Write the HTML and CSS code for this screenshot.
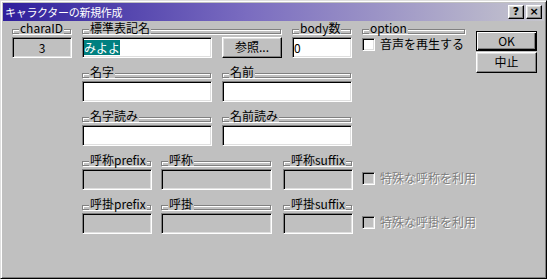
FILE: index.html
```html
<!DOCTYPE html>
<html lang="ja">
<head>
  <meta charset="UTF-8" />
  <title>キャラクターの新規作成</title>
  <link rel="stylesheet" href="styles.css">
</head>
<body>
  <div class="window">
    <div class="titlebar">
      <span class="title">キャラクターの新規作成</span>
      <div class="caption-btns">
        <span class="cap-btn">?</span>
        <span class="cap-btn">×</span>
      </div>
    </div>

    <div class="content">
      <div class="col-left">
        <div class="field w60">
          <div class="group"></div>
          <span class="label">charaID</span>
          <div class="edit readonly center">3</div>
        </div>
      </div>

      <div class="col-main">
        <div class="row">
          <div class="field w200">
            <div class="group"></div>
            <span class="label">標準表記名</span>
            <div class="pair">
              <div class="edit w130"><span class="sel">みよよ</span></div>
              <div class="btn w60">参照...</div>
            </div>
          </div>
          <div class="field w60">
            <div class="group"></div>
            <span class="label">body数</span>
            <div class="edit">0</div>
          </div>
          <div class="field w104">
            <div class="group"></div>
            <span class="label">option</span>
            <div class="check option-check">
              <span class="box"></span>
              <span>音声を再生する</span>
            </div>
          </div>
        </div>

        <div class="row">
          <div class="field w130">
            <div class="group"></div>
            <span class="label">名字</span>
            <div class="edit"></div>
          </div>
          <div class="field w130">
            <div class="group"></div>
            <span class="label">名前</span>
            <div class="edit"></div>
          </div>
        </div>

        <div class="row">
          <div class="field w130">
            <div class="group"></div>
            <span class="label">名字読み</span>
            <div class="edit"></div>
          </div>
          <div class="field w130">
            <div class="group"></div>
            <span class="label">名前読み</span>
            <div class="edit"></div>
          </div>
        </div>

        <div class="row row-call">
          <div class="field w70">
            <div class="group"></div>
            <span class="label">呼称prefix</span>
            <div class="edit disabled"></div>
          </div>
          <div class="field w111">
            <div class="group"></div>
            <span class="label">呼称</span>
            <div class="edit disabled"></div>
          </div>
          <div class="field w70">
            <div class="group"></div>
            <span class="label">呼称suffix</span>
            <div class="edit disabled"></div>
          </div>
          <div class="check off">
            <span class="box"></span>
            <span>特殊な呼称を利用</span>
          </div>
        </div>

        <div class="row row-call">
          <div class="field w70">
            <div class="group"></div>
            <span class="label">呼掛prefix</span>
            <div class="edit disabled"></div>
          </div>
          <div class="field w111">
            <div class="group"></div>
            <span class="label">呼掛</span>
            <div class="edit disabled"></div>
          </div>
          <div class="field w70">
            <div class="group"></div>
            <span class="label">呼掛suffix</span>
            <div class="edit disabled"></div>
          </div>
          <div class="check off">
            <span class="box"></span>
            <span>特殊な呼掛を利用</span>
          </div>
        </div>
      </div>

      <div class="col-buttons">
        <div class="btn default">OK</div>
        <div class="btn">中止</div>
      </div>
    </div>
  </div>
</body>
</html>
```

FILE: styles.css
```css
body {
  margin: 0;
  background: #c0c0c0;
  font-family: "Noto Sans CJK JP", sans-serif;
  font-size: 12px;
  color: #000;
}

.window {
  width: 547px;
  height: 279px;
  box-sizing: border-box;
  background: #c0c0c0;
  border: 1px solid;
  border-color: #dfdfdf #000 #000 #dfdfdf;
  box-shadow: inset 1px 1px #fff, inset -1px -1px #808080;
  padding: 2px;
}

.titlebar {
  height: 18px;
  display: flex;
  align-items: center;
  justify-content: space-between;
  padding: 0 2px 0 2px;
  background: linear-gradient(to right, #2e1e9c, #7a6cc0 45%, #c6c6ce);
}

.title {
  color: #fff;
  font-size: 11px;
  line-height: 14px;
  letter-spacing: -0.3px;
}

.caption-btns {
  display: flex;
  gap: 2px;
}

.cap-btn {
  width: 16px;
  height: 14px;
  box-sizing: border-box;
  background: #c0c0c0;
  border: 1px solid;
  border-color: #fff #000 #000 #fff;
  box-shadow: inset -1px -1px #808080, inset 1px 1px #dfdfdf;
  font-family: "DejaVu Sans", sans-serif;
  font-weight: bold;
  font-size: 11px;
  line-height: 12px;
  text-align: center;
}

.content {
  display: flex;
  padding: 8px 0 0 9px;
}

.col-left {
  width: 60px;
  margin-right: 10px;
  flex-shrink: 0;
}

.col-main {
  width: 384px;
  flex-shrink: 0;
}

.col-buttons {
  width: 61px;
  margin-left: 10px;
  padding-top: 2px;
  display: flex;
  flex-direction: column;
  gap: 1px;
  flex-shrink: 0;
}

.row {
  display: flex;
  gap: 10px;
  margin-bottom: 15px;
}

.row-call {
  gap: 0;
}

.row-call .field + .field {
  margin-left: 9px;
}

.row-call .field:nth-child(3) {
  margin-left: 11px;
}

.field {
  position: relative;
  flex-shrink: 0;
}

.w60 { width: 60px; }
.w70 { width: 70px; }
.w104 { width: 104px; }
.w111 { width: 111px; }
.w130 { width: 130px; }
.w200 { width: 200px; }

.group {
  width: calc(100% - 1px);
  height: 5px;
  box-sizing: border-box;
  border: 1px solid #808080;
  box-shadow: inset 1px 1px #fff, 1px 1px #fff;
}

.label {
  position: absolute;
  top: -8px;
  left: 7px;
  padding: 0 1px;
  background: #c0c0c0;
  line-height: 13px;
  white-space: nowrap;
}

.edit {
  margin-top: 3px;
  height: 21px;
  box-sizing: border-box;
  border: 1px solid;
  border-color: #808080 #fff #fff #808080;
  box-shadow: inset 1px 1px #000, inset -1px -1px #dfdfdf;
  background: #fff;
  padding: 1px 1px 0;
  line-height: 17px;
}

.edit.readonly,
.edit.disabled {
  background: #c0c0c0;
}

.center {
  text-align: center;
}

.sel {
  display: inline-block;
  background: #008080;
  color: #fff;
  line-height: 15px;
  margin-top: 1px;
}

.pair {
  display: flex;
  gap: 10px;
}

.pair .edit {
  width: 130px;
}

.btn {
  height: 21px;
  box-sizing: border-box;
  background: #c0c0c0;
  border: 1px solid;
  border-color: #fff #000 #000 #fff;
  box-shadow: inset -1px -1px #808080, inset 1px 1px #dfdfdf;
  text-align: center;
  line-height: 18px;
}

.pair .btn {
  margin-top: 3px;
}

.btn.default {
  height: 20px;
  border: 1px solid #000;
  box-shadow: inset 1px 1px #fff, inset -1px -1px #000, inset -2px -2px #808080;
  line-height: 17px;
}

.check {
  display: flex;
  align-items: center;
  gap: 5px;
  line-height: 14px;
  white-space: nowrap;
}

.option-check {
  margin-top: 3px;
}

.row-call .check {
  margin-left: 9px;
  align-self: flex-start;
  margin-top: 10px;
}

.box {
  width: 13px;
  height: 13px;
  box-sizing: border-box;
  border: 1px solid;
  border-color: #808080 #fff #fff #808080;
  box-shadow: inset 1px 1px #000, inset -1px -1px #dfdfdf;
  background: #fff;
}

.check.off {
  color: #808080;
  text-shadow: 1px 1px #fff;
}

.check.off .box {
  background: #c0c0c0;
}
```
